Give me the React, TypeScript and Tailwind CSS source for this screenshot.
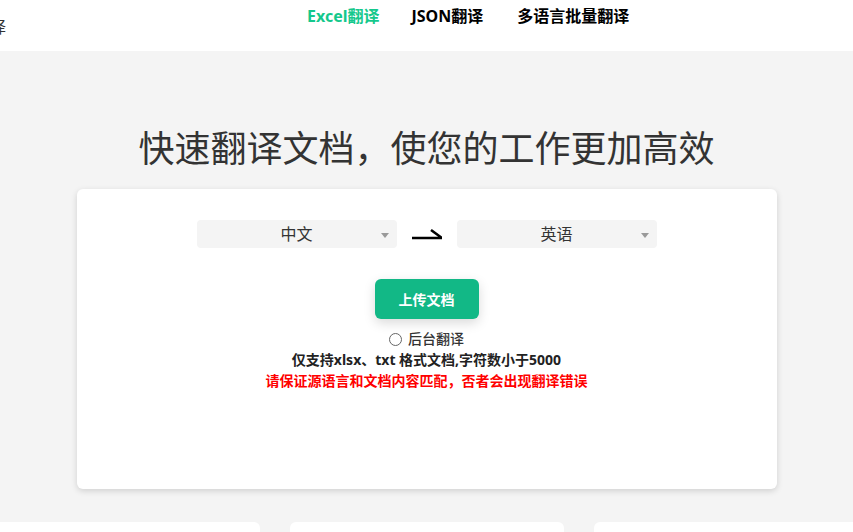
import React from 'react';

const font = { fontFamily: '"Noto Sans", "Noto Sans CJK SC", sans-serif' };

function LangSelect({ label }: { label: string }) {
  return (
    <div className="relative flex h-[28px] w-[200px] items-center justify-center rounded-[4px] bg-[#f4f4f4] text-[16px] text-[#333]">
      <span>{label}</span>
      <span className="absolute right-[8px] top-[13px] h-0 w-0 border-x-[4px] border-t-[5px] border-x-transparent border-t-[#999]" />
    </div>
  );
}

function Harpoon() {
  return (
    <svg width="30" height="16" viewBox="0 0 30 16" className="shrink-0">
      <path d="M0 12 H30 L19 4" fill="none" stroke="#000" strokeWidth="2.6" />
    </svg>
  );
}

export default function App() {
  return (
    <div className="h-[532px] overflow-hidden bg-[#f4f4f4]" style={font}>
      <header className="flex h-[51px] items-start bg-white">
        <div className="ml-[-58px] mt-[17px] text-[16px] leading-[20px] text-[#333]">文档翻译</div>
        <nav className="ml-[301px] mt-[5px] flex gap-[32px] text-[16px] font-bold leading-[22px]">
          <a className="text-[#14c88c]">Excel翻译</a>
          <a className="text-black">JSON翻译</a>
          <a className="ml-[2px] text-black">多语言批量翻译</a>
        </nav>
      </header>

      <h1 className="pt-[73px] pb-[15px] text-center text-[36px] font-normal leading-[50px] text-[#333]">
        快速翻译文档，使您的工作更加高效
      </h1>

      <section className="mx-auto flex h-[300px] w-[700px] flex-col items-center rounded-[6px] bg-white pt-[31px] shadow-[0_2px_6px_rgba(0,0,0,0.15)]">
        <div className="flex items-center gap-[15px]">
          <LangSelect label="中文" />
          <Harpoon />
          <LangSelect label="英语" />
        </div>

        <button className="mt-[31px] h-[40px] w-[104px] rounded-[6px] bg-[#12b886] text-[14px] font-bold text-white shadow-[0_4px_12px_rgba(0,0,0,0.15)]">
          上传文档
        </button>

        <label className="mt-[10px] flex items-center gap-[6px] text-[14px] font-medium leading-[20px] text-[#333]">
          <span className="h-[13px] w-[13px] rounded-full border border-[#666] bg-white" />
          <span>后台翻译</span>
        </label>
        <p className="text-[14px] font-bold leading-[21px] text-[#222]">仅支持xlsx、txt 格式文档,字符数小于5000</p>
        <p className="text-[14px] font-bold leading-[21px] text-[#ff0000]">请保证源语言和文档内容匹配，否者会出现翻译错误</p>
      </section>

      <div className="mt-[33px] flex justify-center gap-[30px]">
        <div className="h-[60px] w-[274px] shrink-0 rounded-[6px] bg-white" />
        <div className="h-[60px] w-[274px] shrink-0 rounded-[6px] bg-white" />
        <div className="h-[60px] w-[274px] shrink-0 rounded-[6px] bg-white" />
      </div>
    </div>
  );
}
